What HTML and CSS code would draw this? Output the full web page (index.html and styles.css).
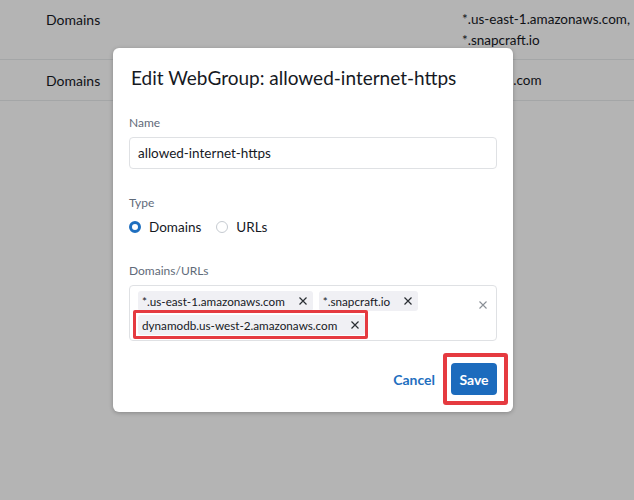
FILE: index.html
```html
<!DOCTYPE html>
<html>
<head>
<meta charset="utf-8">
<link rel="stylesheet" href="styles.css">
</head>
<body>
<div class="page">
  <div class="row row-tall">
    <div class="cell-type">Domains</div>
    <div class="cell-value">*.us-east-1.amazonaws.com,<br>*.snapcraft.io</div>
  </div>
  <div class="row">
    <div class="cell-type">Domains</div>
    <div class="cell-value">*.ubuntu.com</div>
  </div>
</div>
<div class="backdrop"></div>
<div class="modal">
  <h2 class="title">Edit WebGroup: allowed-internet-https</h2>
  <div class="field">
    <div class="label">Name</div>
    <div class="input">allowed-internet-https</div>
  </div>
  <div class="field">
    <div class="label">Type</div>
    <div class="radios">
      <span class="radio checked"></span><span class="radio-text">Domains</span>
      <span class="radio"></span><span class="radio-text">URLs</span>
    </div>
  </div>
  <div class="field">
    <div class="label">Domains/URLs</div>
    <div class="multi">
      <div class="tags">
        <span class="tag">*.us-east-1.amazonaws.com<svg class="x" viewBox="0 0 8 8"><path d="M0.5 0.5L7.5 7.5M7.5 0.5L0.5 7.5"/></svg></span>
        <span class="tag">*.snapcraft.io<svg class="x" viewBox="0 0 8 8"><path d="M0.5 0.5L7.5 7.5M7.5 0.5L0.5 7.5"/></svg></span>
        <span class="tag hl">dynamodb.us-west-2.amazonaws.com<svg class="x" viewBox="0 0 8 8"><path d="M0.5 0.5L7.5 7.5M7.5 0.5L0.5 7.5"/></svg></span>
      </div>
      <svg class="clear" viewBox="0 0 8 8"><path d="M0.5 0.5L7.5 7.5M7.5 0.5L0.5 7.5"/></svg>
    </div>
  </div>
  <div class="actions">
    <span class="cancel">Cancel</span>
    <span class="save">Save</span>
  </div>
</div>
</body>
</html>
```

FILE: styles.css
```css
* { box-sizing: border-box; }
html, body { margin: 0; padding: 0; }
body {
  width: 634px;
  height: 500px;
  overflow: hidden;
  background: #ffffff;
  font-family: "Lato", "Liberation Sans", sans-serif;
  color: #16191f;
  position: relative;
}
.row {
  display: flex;
  border-bottom: 1px solid #e9ebed;
  height: 41px;
  align-items: center;
  font-size: 14px;
}
.row-tall { height: 60px; align-items: flex-start; padding-top: 9px; line-height: 21px; }
.cell-type { width: 462px; padding-left: 46px; flex: none; }
.cell-value { white-space: nowrap; font-size: 13.5px; }
.backdrop {
  position: absolute;
  inset: 0;
  background: rgba(0,0,0,0.295);
}
.modal {
  position: absolute;
  left: 113px;
  top: 48px;
  width: 400px;
  background: #fff;
  border-radius: 6px;
  box-shadow: 0 1px 4px rgba(0,0,0,0.25);
  padding: 16px 16px 17px 16px;
}
.title {
  margin: 0 0 23px 2px;
  font-size: 19px;
  line-height: 28px;
  font-weight: 400;
  color: #16191f;
}
.field { margin-bottom: 26px; }
.label {
  font-size: 12px;
  line-height: 16px;
  color: #5f6b7a;
  margin-bottom: 6px;
}
.input {
  height: 32px;
  border: 1px solid #dfe1e4;
  border-radius: 4px;
  font-size: 13.5px;
  line-height: 30px;
  padding-left: 8px;
}
.radios {
  display: flex;
  align-items: center;
  height: 20px;
  font-size: 13.5px;
}
.radio {
  width: 12px;
  height: 12px;
  border-radius: 50%;
  border: 1px solid #c6cbd1;
  margin-right: 8px;
}
.radio.checked { border: 3.5px solid #1f6fbf; }
.radio-text { margin-right: 15px; }
.multi {
  border: 1px solid #dfe1e4;
  border-radius: 4px;
  height: 56px;
  padding: 5px 8px 5px 8px;
  display: flex;
  justify-content: space-between;
  align-items: flex-start;
}
.tags {
  display: flex;
  flex-wrap: wrap;
  gap: 4px 6px;
  width: 300px;
}
.tag {
  display: inline-flex;
  align-items: center;
  height: 20px;
  background: #f0f0f4;
  border-radius: 3px;
  font-size: 11.7px;
  padding: 0 6px 0 4px;
  color: #16191f;
  white-space: nowrap;
  position: relative;
}
.tag .x {
  width: 8px;
  height: 8px;
  margin-left: 14px;
  stroke: #2a2e33;
  stroke-width: 1.2;
  fill: none;
}
.tag.hl::after {
  content: "";
  position: absolute;
  left: -5px;
  right: -3px;
  top: -5px;
  bottom: -4px;
  border: 3px solid #e53a40;
  border-radius: 2px;
}
.clear {
  width: 8px;
  height: 8px;
  margin-top: 10px;
  margin-right: 1px;
  stroke: #8a8f96;
  stroke-width: 1.1;
  fill: none;
}
.actions {
  display: flex;
  justify-content: flex-end;
  align-items: center;
  gap: 16px;
  margin-top: -4px;
}
.cancel { font-size: 14px; font-weight: 700; color: #1f6fbf; }
.save {
  position: relative;
  background: #1c6bbd;
  color: #fff;
  font-weight: 700;
  font-size: 14px;
  width: 46px;
  height: 32px;
  border-radius: 4px;
  display: flex;
  align-items: center;
  justify-content: center;
}
.save::after {
  content: "";
  position: absolute;
  left: -8px;
  right: -11px;
  top: -10px;
  bottom: -10px;
  border: 4px solid #e53a40;
  border-radius: 3px;
}
```
